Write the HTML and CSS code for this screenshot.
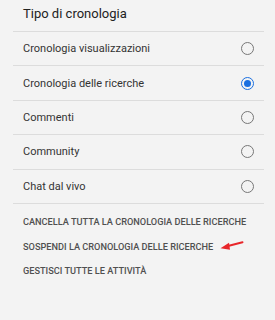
FILE: index.html
```html
<!DOCTYPE html>
<html>
<head>
<meta charset="utf-8">
<link rel="stylesheet" href="styles.css">
</head>
<body>
<div class="panel">
  <div class="title">Tipo di cronologia</div>
  <ul class="list">
    <li class="row"><span>Cronologia visualizzazioni</span><span class="radio"></span></li>
    <li class="row"><span>Cronologia delle ricerche</span><span class="radio on"></span></li>
    <li class="row"><span>Commenti</span><span class="radio"></span></li>
    <li class="row"><span>Community</span><span class="radio"></span></li>
    <li class="row"><span>Chat dal vivo</span><span class="radio"></span></li>
  </ul>
  <div class="actions">
    <div class="action">CANCELLA TUTTA LA CRONOLOGIA DELLE RICERCHE</div>
    <div class="action">SOSPENDI LA CRONOLOGIA DELLE RICERCHE<svg class="arrow" width="24" height="9" viewBox="0 0 24 9"><path d="M22.5 1.2 L7 5.2" stroke="#e8262a" stroke-width="2" stroke-linecap="round"/><path d="M0.5 7.3 L9 1.8 L10 8.8 Z" fill="#e8262a"/></svg></div>
    <div class="action">GESTISCI TUTTE LE ATTIVITÀ</div>
  </div>
</div>
</body>
</html>
```
FILE: styles.css
```css
html, body { margin: 0; padding: 0; }
body {
  background: #f3f3f3;
  font-family: Roboto, "Noto Sans", sans-serif;
  width: 275px;
  height: 320px;
  overflow: hidden;
}
.panel { padding: 0 11px 0 13px; }
.title {
  height: 32px;
  box-sizing: border-box;
  padding: 6px 0 0 10px;
  font-size: 13px;
  color: #222;
  border-bottom: 1px solid #dcdcdc;
}
.list { list-style: none; margin: 0; padding: 0; }
.row {
  height: 34.4px;
  box-sizing: border-box;
  border-bottom: 1px solid #dcdcdc;
  display: flex;
  align-items: center;
  justify-content: space-between;
  padding: 0 10px 0 10px;
  font-size: 11px;
  color: #333;
}
.radio {
  width: 11px;
  height: 11px;
  border: 1.3px solid #777;
  border-radius: 50%;
  position: relative;
}
.radio.on { border-color: #1a6fe0; border-width: 1.8px; }
.radio.on::after {
  content: "";
  position: absolute;
  left: 2px; top: 2px;
  width: 7px; height: 7px;
  border-radius: 50%;
  background: #1a6fe0;
}
.actions { padding: 12.5px 0 0 10px; display: flex; flex-direction: column; gap: 12.5px; }
.action {
  font-size: 9.2px;
  font-weight: 500;
  color: #505050;
  line-height: 12px;
  white-space: nowrap;
  display: flex;
  align-items: center;
}
.arrow { margin-left: 7px; margin-top: -3px; }
```
